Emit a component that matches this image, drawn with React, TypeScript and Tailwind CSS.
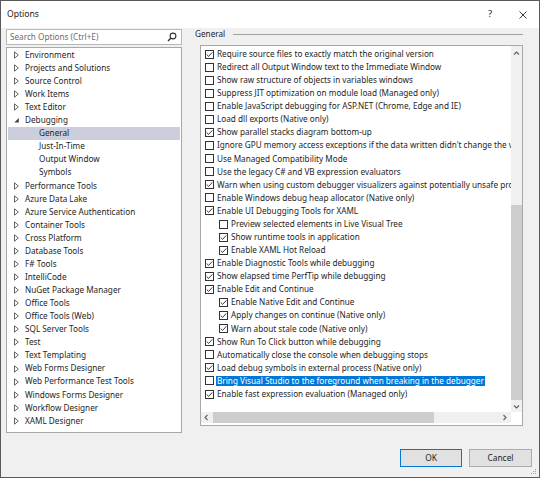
import React from "react";

const tree: { label: string; level: number; state: "c" | "e" | "n"; selected?: boolean }[] = [
  { label: "Environment", level: 0, state: "c" },
  { label: "Projects and Solutions", level: 0, state: "c" },
  { label: "Source Control", level: 0, state: "c" },
  { label: "Work Items", level: 0, state: "c" },
  { label: "Text Editor", level: 0, state: "c" },
  { label: "Debugging", level: 0, state: "e" },
  { label: "General", level: 1, state: "n", selected: true },
  { label: "Just-In-Time", level: 1, state: "n" },
  { label: "Output Window", level: 1, state: "n" },
  { label: "Symbols", level: 1, state: "n" },
  { label: "Performance Tools", level: 0, state: "c" },
  { label: "Azure Data Lake", level: 0, state: "c" },
  { label: "Azure Service Authentication", level: 0, state: "c" },
  { label: "Container Tools", level: 0, state: "c" },
  { label: "Cross Platform", level: 0, state: "c" },
  { label: "Database Tools", level: 0, state: "c" },
  { label: "F# Tools", level: 0, state: "c" },
  { label: "IntelliCode", level: 0, state: "c" },
  { label: "NuGet Package Manager", level: 0, state: "c" },
  { label: "Office Tools", level: 0, state: "c" },
  { label: "Office Tools (Web)", level: 0, state: "c" },
  { label: "SQL Server Tools", level: 0, state: "c" },
  { label: "Test", level: 0, state: "c" },
  { label: "Text Templating", level: 0, state: "c" },
  { label: "Web Forms Designer", level: 0, state: "c" },
  { label: "Web Performance Test Tools", level: 0, state: "c" },
  { label: "Windows Forms Designer", level: 0, state: "c" },
  { label: "Workflow Designer", level: 0, state: "c" },
  { label: "XAML Designer", level: 0, state: "c" },
];

const opts: { label: string; checked: boolean; indent?: boolean; selected?: boolean }[] = [
  { label: "Require source files to exactly match the original version", checked: true },
  { label: "Redirect all Output Window text to the Immediate Window", checked: false },
  { label: "Show raw structure of objects in variables windows", checked: false },
  { label: "Suppress JIT optimization on module load (Managed only)", checked: false },
  { label: "Enable JavaScript debugging for ASP.NET (Chrome, Edge and IE)", checked: false },
  { label: "Load dll exports (Native only)", checked: false },
  { label: "Show parallel stacks diagram bottom-up", checked: true },
  { label: "Ignore GPU memory access exceptions if the data written didn't change the value", checked: false },
  { label: "Use Managed Compatibility Mode", checked: false },
  { label: "Use the legacy C# and VB expression evaluators", checked: false },
  { label: "Warn when using custom debugger visualizers against potentially unsafe processes", checked: true },
  { label: "Enable Windows debug heap allocator (Native only)", checked: false },
  { label: "Enable UI Debugging Tools for XAML", checked: true },
  { label: "Preview selected elements in Live Visual Tree", checked: false, indent: true },
  { label: "Show runtime tools in application", checked: true, indent: true },
  { label: "Enable XAML Hot Reload", checked: true, indent: true },
  { label: "Enable Diagnostic Tools while debugging", checked: true },
  { label: "Show elapsed time PerfTip while debugging", checked: true },
  { label: "Enable Edit and Continue", checked: true },
  { label: "Enable Native Edit and Continue", checked: true, indent: true },
  { label: "Apply changes on continue (Native only)", checked: true, indent: true },
  { label: "Warn about stale code (Native only)", checked: true, indent: true },
  { label: "Show Run To Click button while debugging", checked: true },
  { label: "Automatically close the console when debugging stops", checked: false },
  { label: "Load debug symbols in external process (Native only)", checked: true },
  { label: "Bring Visual Studio to the foreground when breaking in the debugger", checked: false, selected: true },
  { label: "Enable fast expression evaluation (Managed only)", checked: true },
];

function Check({ checked }: { checked: boolean }) {
  return (
    <svg width="9" height="9" viewBox="0 0 9 9" className="flex-none">
      <rect x="0.5" y="0.5" width="8" height="8" fill="#ffffff" stroke="#333333" strokeWidth="1" />
      {checked && <path d="M1.7 4.5 L3.6 6.4 L7.3 2.4" fill="none" stroke="#222222" strokeWidth="0.9" />}
    </svg>
  );
}

function Arrow({ state }: { state: "c" | "e" | "n" }) {
  if (state === "c")
    return (
      <svg width="5" height="8" viewBox="0 0 5 8" className="flex-none">
        <path d="M0.5 0.8 L4.3 4 L0.5 7.2 Z" fill="none" stroke="#555555" strokeWidth="0.9" />
      </svg>
    );
  if (state === "e")
    return (
      <svg width="5" height="8" viewBox="0 0 5 8" className="flex-none">
        <path d="M4.8 2 L4.8 6.5 L0.3 6.5 Z" fill="#444444" />
      </svg>
    );
  return <span className="w-[5px] flex-none" />;
}

function Chevron({ dir }: { dir: "up" | "down" | "left" | "right" }) {
  const d =
    dir === "up"
      ? "M1 4.5 L3.5 2 L6 4.5"
      : dir === "down"
      ? "M1 2.5 L3.5 5 L6 2.5"
      : dir === "left"
      ? "M4.5 1 L2 3.5 L4.5 6"
      : "M2.5 1 L5 3.5 L2.5 6";
  return (
    <svg width="7" height="7" viewBox="0 0 7 7">
      <path d={d} fill="none" stroke="#606060" strokeWidth="1.1" />
    </svg>
  );
}

export default function App() {
  return (
    <div className="relative w-[540px] h-[478px] bg-[#f0f0f0] border border-[#5a5a5a] flex flex-col overflow-hidden font-['Noto_Sans','Liberation_Sans',sans-serif] text-[8.2px] text-[#1e1e1e]">
      {/* title bar */}
      <div className="h-[27px] flex-none flex items-center pl-[6px] bg-[#ffffff]">
        <span className="flex-1 text-[8.6px] text-[#1a1a1a]">Options</span>
        <span className="w-[10px] text-center text-[9.5px] mr-[24px] text-[#222]">?</span>
        <svg width="8" height="8" viewBox="0 0 8 8" className="mr-[12px]">
          <path d="M0.5 0.5 L7.5 7.5 M7.5 0.5 L0.5 7.5" stroke="#222222" strokeWidth="0.9" />
        </svg>
      </div>

      {/* body */}
      <div className="h-[405px] flex-none flex">
        {/* left column */}
        <div className="w-[176px] ml-[5px] flex flex-col">
          <div className="mt-[1px] h-[16px] bg-white border border-[#b9b9b9] flex items-center pl-[3px] pr-[4px]">
            <span className="flex-1 text-[#6d6d6d]">Search Options (Ctrl+E)</span>
            <svg width="10" height="10" viewBox="0 0 10 10">
              <circle cx="6" cy="4" r="2.9" fill="none" stroke="#333333" strokeWidth="1.1" />
              <path d="M4 6 L1 9" stroke="#333333" strokeWidth="1.4" />
            </svg>
          </div>
          <div className="mt-[2px] h-[386px] bg-white border border-[#a8a8a8] pt-[0.5px] overflow-hidden">
            {tree.map((t) => (
              <div
                key={t.label}
                className={
                  "h-[13.07px] flex items-center whitespace-nowrap " +
                  (t.selected ? "bg-[#cccedb] mx-[1px] pl-[31px]" : t.level === 1 ? "pl-[32px]" : "pl-[7px]")
                }
              >
                {t.level === 0 && <Arrow state={t.state} />}
                <span className={t.level === 0 ? "ml-[6px]" : ""}>{t.label}</span>
              </div>
            ))}
          </div>
        </div>

        {/* right column */}
        <div className="ml-[13px] w-[329px] flex flex-col">
          <div className="h-[12px] mt-[0px] flex items-center pr-[1px]">
            <span>General</span>
            <span className="flex-1 h-px bg-[#a0a0a0] ml-[8px]" />
          </div>
          <div className="mt-[5px] ml-[5px] w-[323px] h-[381px] bg-white border border-[#a8a8a8] flex flex-col">
            <div className="flex flex-1 min-h-0">
              <div className="flex-1 overflow-hidden pt-[1.5px] pl-[4px]">
                {opts.map((o) => (
                  <div
                    key={o.label}
                    className={"h-[13.08px] flex items-center whitespace-nowrap " + (o.indent ? "pl-[14px]" : "")}
                  >
                    <Check checked={o.checked} />
                    <span
                      className={
                        o.selected
                          ? "ml-[2px] px-[1px] bg-[#0078d7] text-white leading-[10px] h-[10px]"
                          : "ml-[3px]"
                      }
                    >
                      {o.label}
                    </span>
                  </div>
                ))}
              </div>
              <div className="w-[11px] bg-[#f0f0f0] flex flex-col">
                <div className="h-[14px] flex items-center justify-center">
                  <Chevron dir="up" />
                </div>
                <div className="h-[145px]" />
                <div className="h-[195px] bg-[#cdcdcd]" />
                <div className="flex-1 flex items-center justify-center">
                  <Chevron dir="down" />
                </div>
              </div>
            </div>
            <div className="h-[11px] flex-none flex mb-[2px]">
              <div className="flex-1 bg-[#f0f0f0] flex">
                <div className="w-[11px] flex items-center justify-center">
                  <Chevron dir="left" />
                </div>
                <div className="ml-[1px] w-[221px] bg-[#cdcdcd]" />
                <div className="flex-1" />
                <div className="w-[13px] flex items-center justify-center">
                  <Chevron dir="right" />
                </div>
              </div>
              <div className="w-[11px] bg-white" />
            </div>
          </div>
        </div>
      </div>

      {/* footer */}
      <div className="mt-[16px] flex justify-end gap-[7px] pr-[7px]">
        <button className="w-[62px] h-[18px] bg-[#e1e1e1] border border-[#0078d7] text-[8.4px] text-[#1e1e1e] flex items-center justify-center">
          OK
        </button>
        <button className="w-[63px] h-[18px] bg-[#e1e1e1] border border-[#adadad] text-[8.4px] text-[#1e1e1e] flex items-center justify-center">
          Cancel
        </button>
      </div>

      <svg width="6" height="6" viewBox="0 0 6 6" className="absolute right-[2px] bottom-[2px]">
        <rect x="4" y="0" width="1" height="1" fill="#a0a0a0" />
        <rect x="2" y="2" width="1" height="1" fill="#a0a0a0" />
        <rect x="4" y="2" width="1" height="1" fill="#a0a0a0" />
        <rect x="0" y="4" width="1" height="1" fill="#a0a0a0" />
        <rect x="2" y="4" width="1" height="1" fill="#a0a0a0" />
        <rect x="4" y="4" width="1" height="1" fill="#a0a0a0" />
      </svg>
    </div>
  );
}
